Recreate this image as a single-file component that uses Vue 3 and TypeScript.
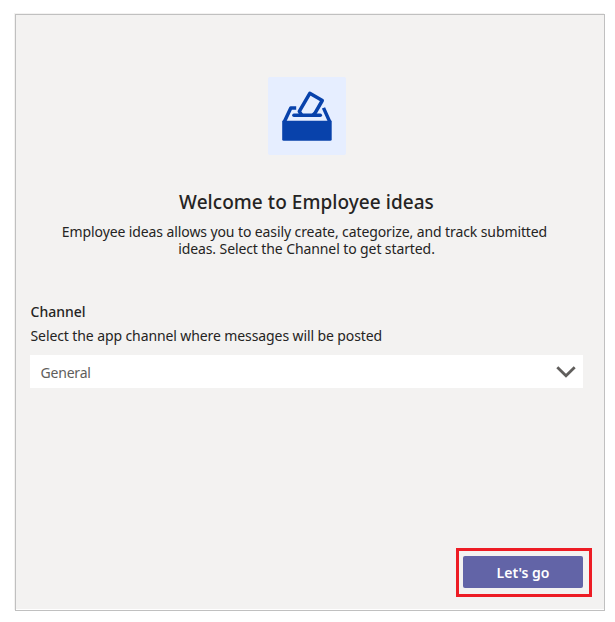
<script setup lang="ts">
import { ref } from 'vue'

const channel = ref<string>('General')
const intro: string[] = [
  'Employee ideas allows you to easily create, categorize, and track submitted',
  'ideas. Select the Channel to get started.',
]
</script>

<template>
  <main class="panel">
    <div class="logo">
      <svg width="78" height="78" viewBox="0 0 78 78">
        <path class="line" d="M28.2 31 H22.8 L16.2 44.9 M55.5 30.9 L61.8 44.9" />
        <path class="slot" d="M25.9 38.3 H52.3" />
        <path class="paper" d="M33.6 38 L31.3 34.4 L41.8 16.3 L54.3 23.5 L47.3 35.6 L45.2 38" />
        <path class="box" d="M14.2 43.8 H63.7 V62.2 Q63.7 63.7 62.2 63.7 H15.7 Q14.2 63.7 14.2 62.2 Z" />
      </svg>
    </div>
    <h1 class="title">Welcome to Employee ideas</h1>
    <p class="intro">
      <span v-for="line in intro" :key="line" class="intro-line">{{ line }}</span>
    </p>
    <section class="field">
      <label class="label">Channel</label>
      <span class="hint">Select the app channel where messages will be posted</span>
      <div class="select" role="combobox">
        <span class="value">{{ channel }}</span>
        <svg class="chevron" width="20" height="12" viewBox="0 0 20 12">
          <path d="M1.3 1.3 L10 9.8 L18.7 1.3" />
        </svg>
      </div>
    </section>
    <div class="highlight">
      <button class="go" type="button">Let's go</button>
    </div>
  </main>
</template>

<style>
body {
  background: #fff;
}
</style>

<style scoped>
.panel {
  box-sizing: border-box;
  display: flex;
  flex-direction: column;
  align-items: center;
  width: 590px;
  height: 597px;
  margin: 14px 0 0 15px;
  padding: 62px 21px 13px 14px;
  border: 1px solid #c0c0c0;
  background: #f3f2f1;
  box-shadow: -1px -1px 0 #f3f2f1, inset 0 -1px 0 #fff;
  color: #252423;
  font-family: "Noto Sans", sans-serif;
  font-size: 14px;
  letter-spacing: -0.1px;
}
.logo {
  width: 78px;
  height: 78px;
  margin-left: 1px;
  border-radius: 2px;
  background: #e6eeff;
}
.logo svg {
  display: block;
}
.line,
.slot,
.paper {
  fill: none;
  stroke: #0842ab;
  stroke-width: 3.5;
  stroke-linecap: round;
  stroke-linejoin: round;
}
.line {
  stroke-linecap: butt;
}
.box {
  fill: #0842ab;
}
.title {
  margin: 33px 0 0;
  font-size: 19px;
  font-weight: 500;
  line-height: 28px;
  letter-spacing: 0.05px;
  white-space: nowrap;
}
.intro {
  display: flex;
  flex-direction: column;
  align-items: center;
  margin: 7px 0 0;
}
.intro-line {
  line-height: 17px;
  white-space: nowrap;
}
.intro-line:first-child {
  padding-right: 4px;
}
.field {
  display: flex;
  flex-direction: column;
  align-self: stretch;
  align-items: flex-start;
  margin-top: 45px;
}
.label {
  font-weight: 500;
  line-height: 20px;
  letter-spacing: 0;
}
.hint {
  margin-top: 4px;
  line-height: 20px;
  white-space: nowrap;
}
.label,
.hint {
  padding-left: 0.5px;
}
.select {
  box-sizing: border-box;
  display: flex;
  align-items: center;
  justify-content: space-between;
  width: 553px;
  height: 33px;
  margin-top: 9px;
  padding: 0 7px 0 10.5px;
  background: #fff;
  color: #605e5c;
}
.value {
  padding-top: 2px;
  letter-spacing: -0.2px;
}
.chevron path {
  fill: none;
  stroke: #605e5c;
  stroke-width: 2.8;
}
.highlight {
  box-sizing: border-box;
  display: flex;
  flex: none;
  width: 136px;
  height: 49px;
  margin: auto -9px 0 0;
  align-self: flex-end;
  padding: 5px 6px 6px 4px;
  border: 3px solid #ed1c24;
}
.go {
  flex: 1;
  padding: 0;
  border: 0;
  border-radius: 2px;
  background: #6264a7;
  color: #fff;
  font: inherit;
  font-weight: 600;
}
</style>
